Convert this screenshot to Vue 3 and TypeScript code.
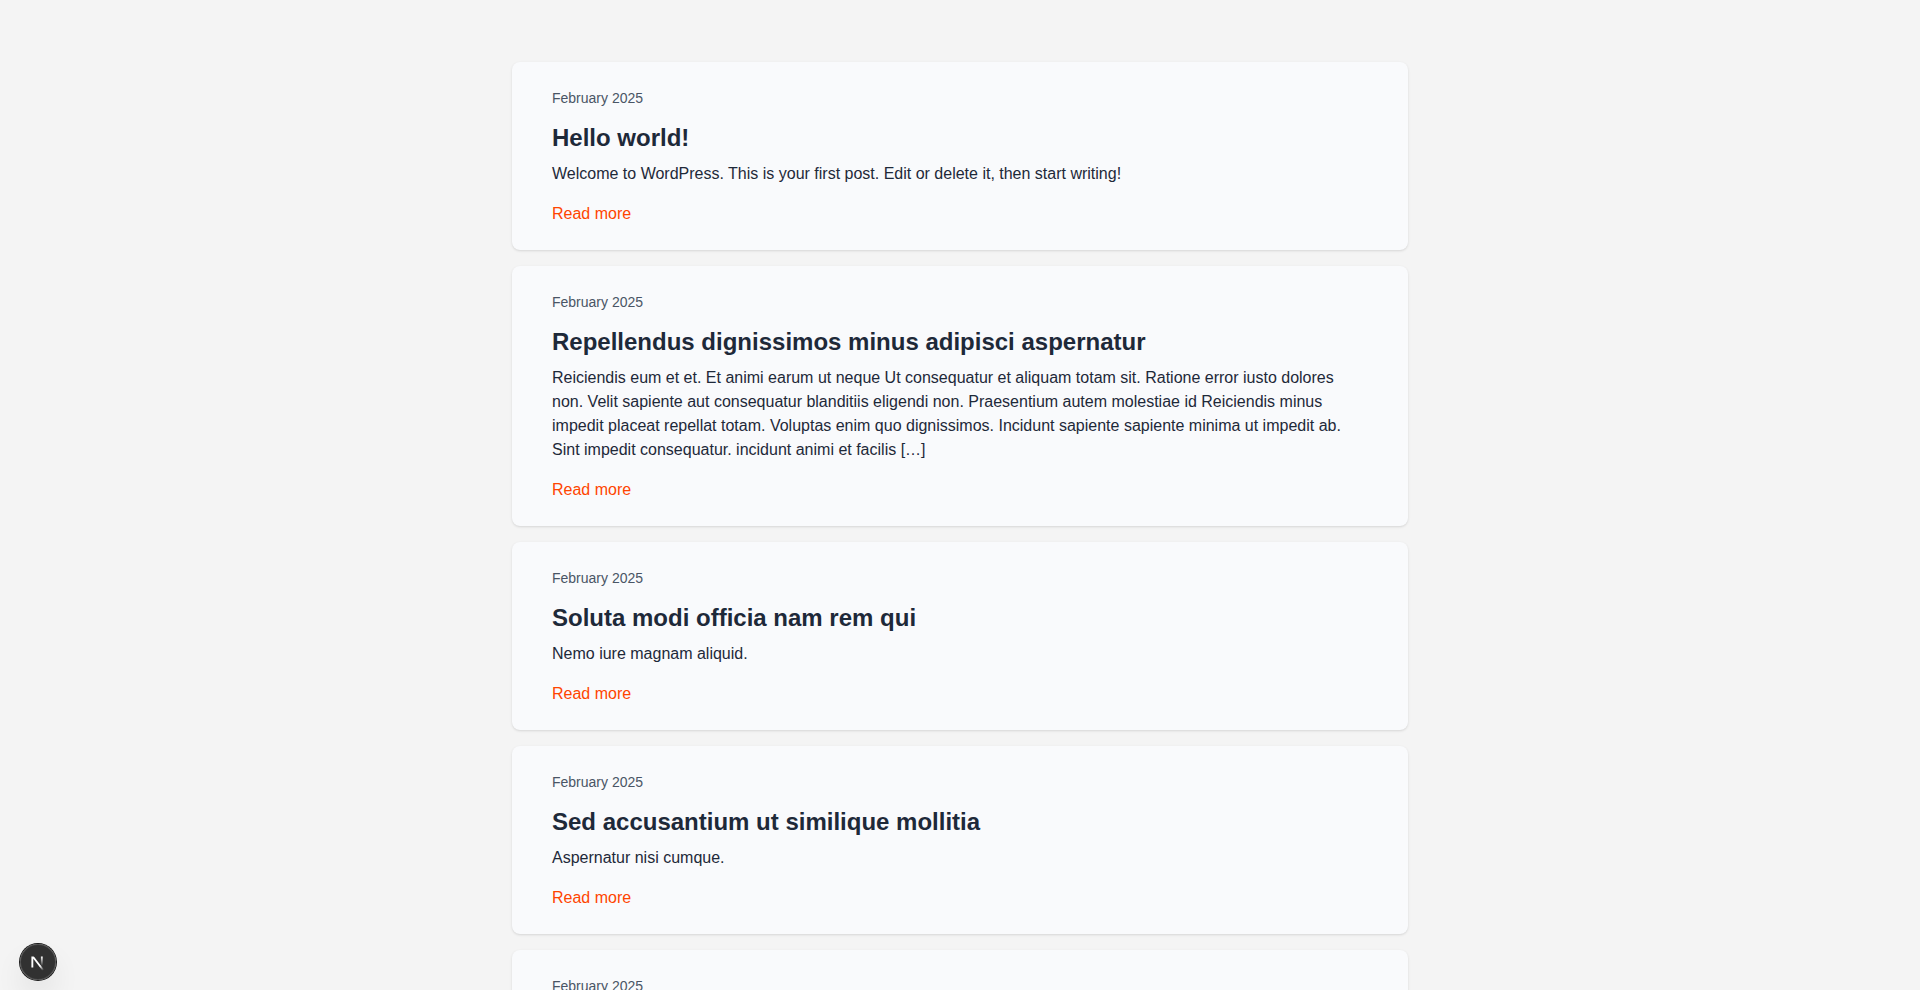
<script setup lang="ts">
interface Post {
  id: number
  date: string
  title: string
  excerpt: string
}

const posts: Post[] = [
  {
    id: 1,
    date: 'February 2025',
    title: 'Hello world!',
    excerpt: 'Welcome to WordPress. This is your first post. Edit or delete it, then start writing!',
  },
  {
    id: 2,
    date: 'February 2025',
    title: 'Repellendus dignissimos minus adipisci aspernatur',
    excerpt:
      'Reiciendis eum et et. Et animi earum ut neque Ut consequatur et aliquam totam sit. Ratione error iusto dolores non. Velit sapiente aut consequatur blanditiis eligendi non. Praesentium autem molestiae id Reiciendis minus impedit placeat repellat totam. Voluptas enim quo dignissimos. Incidunt sapiente sapiente minima ut impedit ab. Sint impedit consequatur. incidunt animi et facilis […]',
  },
  {
    id: 3,
    date: 'February 2025',
    title: 'Soluta modi officia nam rem qui',
    excerpt: 'Nemo iure magnam aliquid.',
  },
  {
    id: 4,
    date: 'February 2025',
    title: 'Sed accusantium ut similique mollitia',
    excerpt: 'Aspernatur nisi cumque.',
  },
]

const nextDate = 'February 2025'
</script>

<template>
  <main class="page">
    <article v-for="post in posts" :key="post.id" class="card">
      <span class="date">{{ post.date }}</span>
      <h2 class="title">{{ post.title }}</h2>
      <p class="excerpt">{{ post.excerpt }}</p>
      <a class="more" href="#" :aria-label="`Read more: ${post.title}`">Read more</a>
    </article>
    <article class="card">
      <span class="date">{{ nextDate }}</span>
    </article>
  </main>

  <button class="badge" type="button" aria-label="Open Next.js Dev Tools">
    <svg width="40" height="40" viewBox="0 0 40 40" fill="none" aria-hidden="true">
      <defs>
        <linearGradient id="diagonal" x1="9.95555" y1="11.1226" x2="15.4778" y2="17.9671" gradientUnits="userSpaceOnUse">
          <stop stop-color="white" />
          <stop offset="0.604072" stop-color="white" stop-opacity="0" />
          <stop offset="1" stop-color="white" stop-opacity="0" />
        </linearGradient>
        <linearGradient id="upright" x1="11.8222" y1="1.40039" x2="11.791" y2="11" gradientUnits="userSpaceOnUse">
          <stop stop-color="white" />
          <stop offset="1" stop-color="white" stop-opacity="0" />
        </linearGradient>
        <mask id="corner">
          <rect width="100%" height="100%" fill="white" />
          <rect width="5" height="1.5" fill="black" />
        </mask>
      </defs>
      <g transform="translate(12 13)">
        <path d="M13.3 15.2 L2.34 1 V12.6" stroke="url(#diagonal)" stroke-width="1.86" mask="url(#corner)" />
        <path d="M11.825 1.5 V13.1" stroke="url(#upright)" stroke-width="1.86" />
      </g>
    </svg>
  </button>
</template>

<style>
body {
  margin: 0;
  background: #f4f4f4;
}
</style>

<style scoped>
.page {
  display: flex;
  flex-direction: column;
  gap: 16px;
  max-width: 896px;
  margin: 0 auto;
  padding-top: 62px;
  font-family: "Liberation Sans", Arial, sans-serif;
  font-size: 16px;
  line-height: 24px;
  color: #1e2939;
}

.card {
  padding: 24px 40px;
  border-radius: 8px;
  background: #f9fafc;
  box-shadow: 0 1px 3px rgba(0, 0, 0, 0.1), 0 1px 2px -1px rgba(0, 0, 0, 0.1);
}

.date {
  display: block;
  font-size: 14px;
  color: #4a5565;
}

.title {
  margin: 12px 0 8px;
  font-size: 24px;
  line-height: 32px;
  font-weight: 700;
}

.excerpt {
  margin: 0 0 16px;
}

.more {
  display: block;
  width: fit-content;
  color: #ff4500;
  text-decoration: none;
}

.more:hover {
  text-decoration: underline;
}

.badge {
  position: fixed;
  left: 20px;
  bottom: 10px;
  display: flex;
  align-items: center;
  justify-content: center;
  width: 36px;
  height: 36px;
  padding: 0;
  border: 0;
  border-radius: 50%;
  background: rgba(0, 0, 0, 0.8);
  box-shadow: 0 0 0 1px #171717, inset 0 0 0 1px rgba(255, 255, 255, 0.14), 0 16px 32px -8px rgba(0, 0, 0, 0.24);
  cursor: pointer;
}

.badge svg {
  flex: none;
}
</style>
